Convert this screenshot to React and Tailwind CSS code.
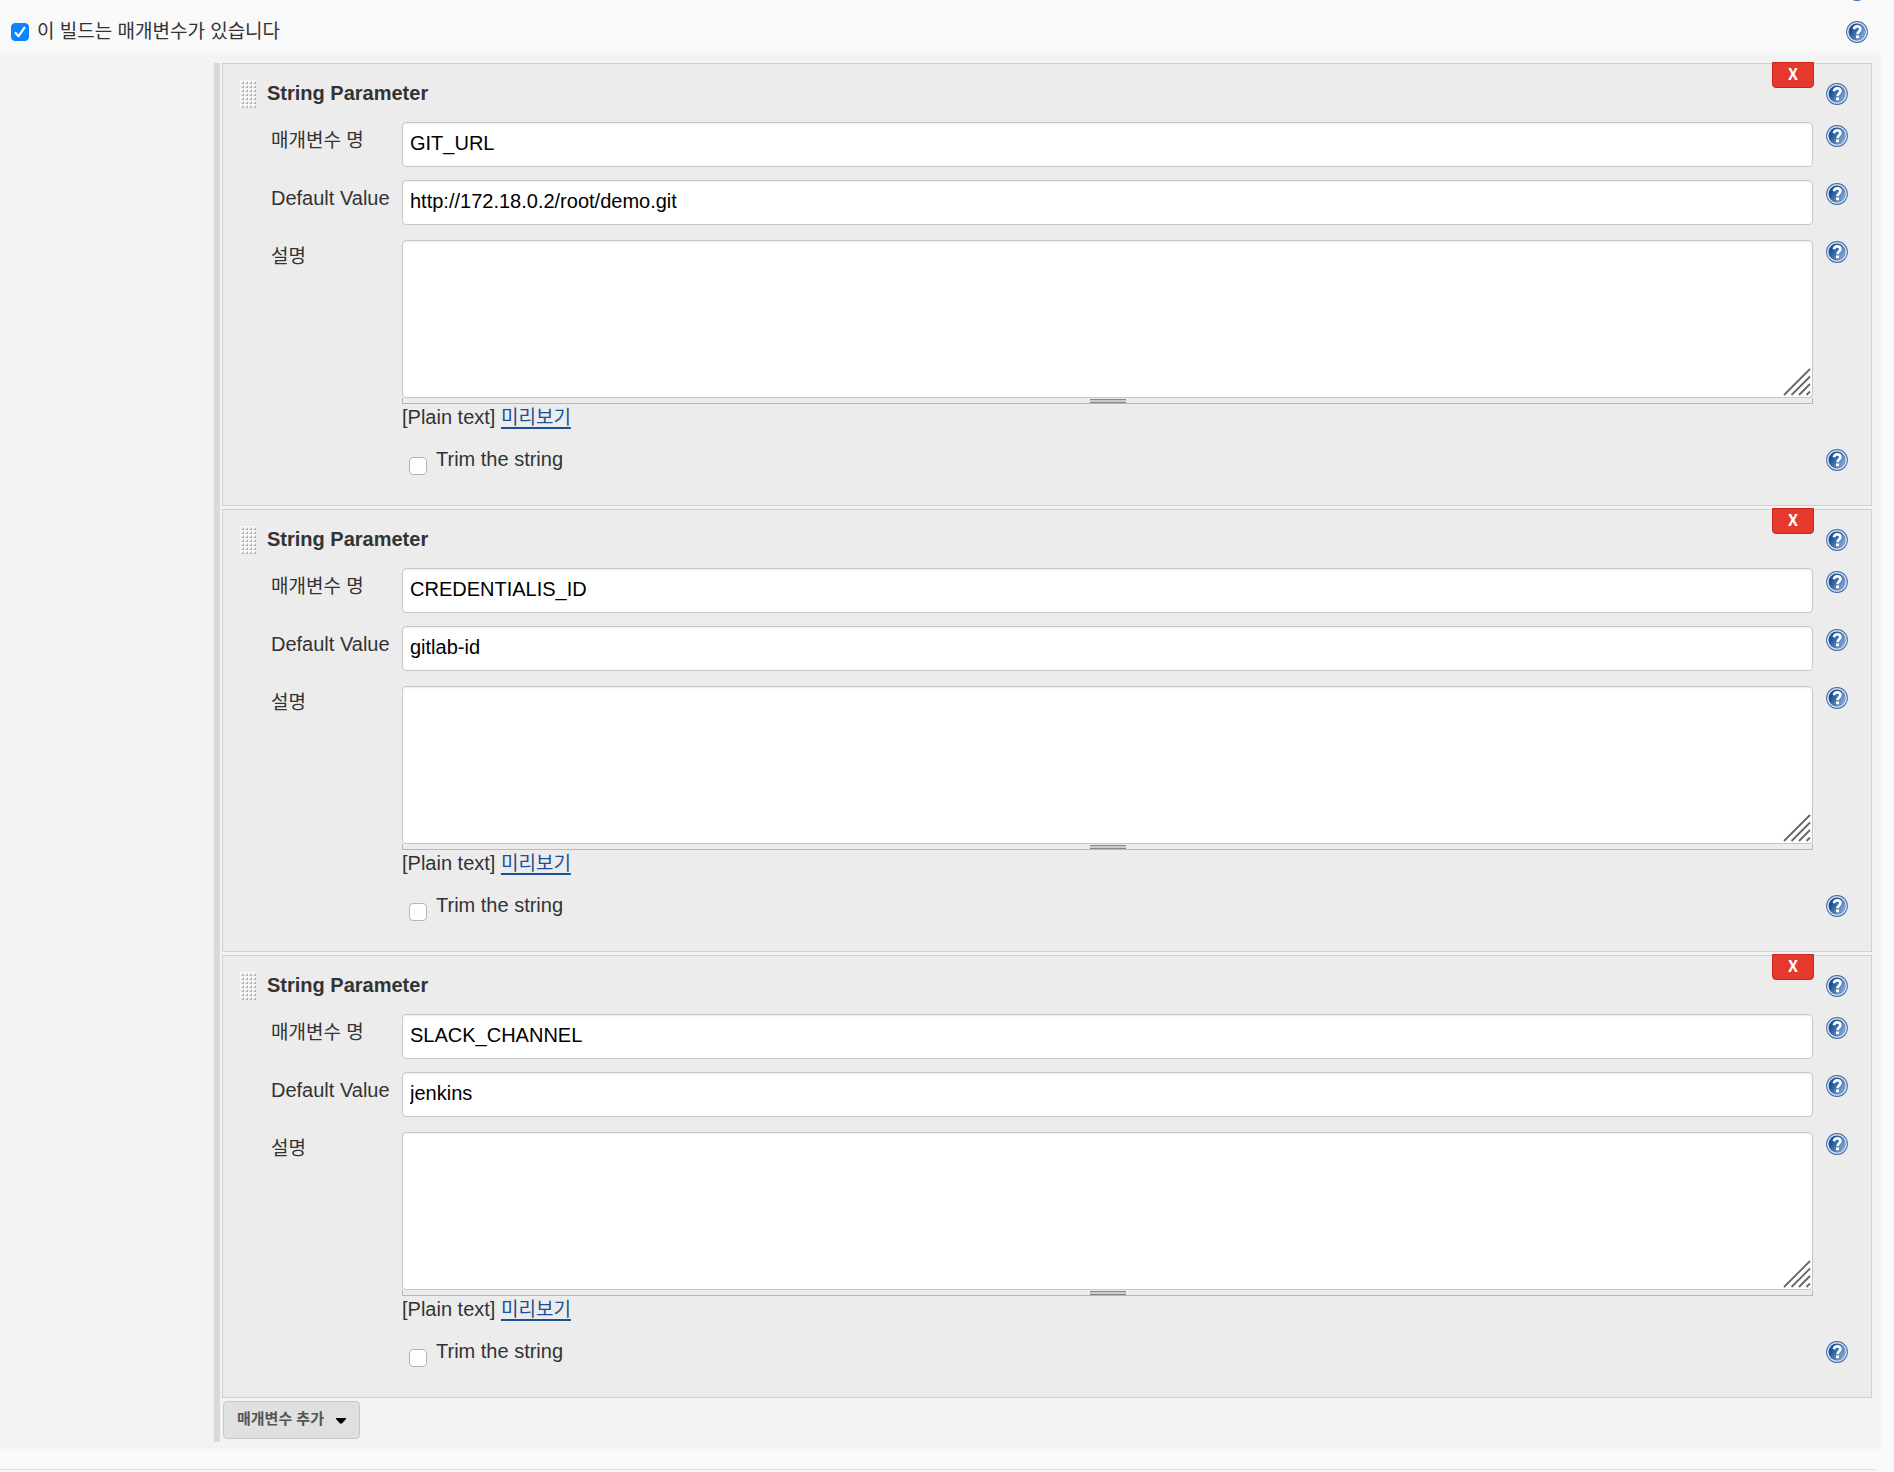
import React, { useState } from 'react';

const INITIAL_PARAMETERS = [
  { id: 1, name: 'GIT_URL', defaultValue: 'http://172.18.0.2/root/demo.git' },
  { id: 2, name: 'CREDENTIALIS_ID', defaultValue: 'gitlab-id' },
  { id: 3, name: 'SLACK_CHANNEL', defaultValue: 'jenkins' },
];

const INPUT_CLASS =
  "block w-full h-[45px] px-[7px] pb-[3px] text-[20px] text-black bg-white border border-[#c8c8c8] rounded-[4px] shadow-[inset_0_1px_2px_rgba(0,0,0,0.08)] outline-none";

function HelpIcon() {
  return (
    <svg viewBox="0 0 22 22" className="block w-[22px] h-[22px]">
      <defs>
        <linearGradient id="helpFill" x1="0" y1="0.2" x2="1" y2="0.8">
          <stop offset="0.2" stopColor="#1d5296" />
          <stop offset="1" stopColor="#8db0d8" />
        </linearGradient>
      </defs>
      <circle cx="11" cy="11" r="10.9" fill="#3f6ca8" />
      <circle cx="11" cy="11" r="9.2" fill="none" stroke="#d3dfee" strokeWidth="1.6" />
      <circle cx="11" cy="11" r="8.2" fill="url(#helpFill)" />
      <path
        d="M7.8 8.2C8.2 6.3 9.4 5.4 11.2 5.4c1.9 0 3.2 1 3.2 2.7 0 2.3-2.8 2.5-2.9 5"
        fill="none"
        stroke="#fff"
        strokeWidth="2.6"
      />
      <rect x="10" y="14.4" width="3" height="2.8" fill="#fff" />
    </svg>
  );
}

function HelpButton({ label }) {
  return (
    <button type="button" aria-label={label} className="block shrink-0">
      <HelpIcon />
    </button>
  );
}

function DragHandle() {
  return (
    <svg viewBox="0 0 16 28" className="block w-4 h-7">
      <defs>
        <pattern id="grip" width="4" height="4" patternUnits="userSpaceOnUse">
          <rect width="4" height="4" fill="#f8f8f8" />
          <path d="M4 1v3H1z" fill="#b4b4b4" />
        </pattern>
      </defs>
      <rect width="16" height="28" fill="url(#grip)" />
    </svg>
  );
}

function Row({ label, htmlFor, help, children }) {
  return (
    <div className="flex items-start pl-12">
      <div className="w-[131px] shrink-0 pt-[6px] leading-6">
        {label && <label htmlFor={htmlFor} className="block">{label}</label>}
      </div>
      <div className="flex-1 min-w-0">{children}</div>
      <div className="shrink-0 pl-[13px] pr-[23px] pt-[3px]">
        <HelpButton label={help} />
      </div>
    </div>
  );
}

function Korean({ children }) {
  return <span className="text-[19px] leading-5">{children}</span>;
}

function ParameterCard({ parameter, onRemove }) {
  const { id, name, defaultValue } = parameter;

  return (
    <section className="relative bg-[#ececec] border border-[#d0d0d0] pb-[30px]">
      <button
        type="button"
        onClick={() => onRemove(id)}
        className="absolute -top-[2px] right-[57px] w-[42px] h-[26px] bg-[#e6392e] border border-[#c9271d] rounded-b-[4px] text-white font-bold text-[16px] leading-5 pb-1 font-['Noto_Sans_CJK_KR',sans-serif]"
      >
        X
      </button>

      <div className="flex items-start h-[58px] pl-[17px] pr-[23px] pt-4">
        <DragHandle />
        <h2 className="flex-1 pl-[11px] font-bold leading-[26px]">String Parameter</h2>
        <div className="pt-[3px]">
          <HelpButton label="String Parameter" />
        </div>
      </div>

      <div className="h-[58px]">
        <Row label={<Korean>매개변수 명</Korean>} htmlFor={`name-${id}`} help="매개변수 명">
          <input id={`name-${id}`} type="text" defaultValue={name} className={INPUT_CLASS} />
        </Row>
      </div>

      <div className="h-[58px]">
        <Row label="Default Value" htmlFor={`default-${id}`} help="Default Value">
          <input id={`default-${id}`} type="text" defaultValue={defaultValue} className={INPUT_CLASS} />
        </Row>
      </div>

      <Row label={<Korean>설명</Korean>} htmlFor={`description-${id}`} help="설명">
        <div className="relative pt-[2px]">
          <textarea
            id={`description-${id}`}
            className="block w-full h-[158px] p-[7px] bg-white border border-[#c8c8c8] rounded-[4px] shadow-[inset_0_1px_2px_rgba(0,0,0,0.08)] resize-none outline-none"
          />
          <svg viewBox="0 0 28 28" className="absolute right-[2px] bottom-[2px] w-7 h-7 pointer-events-none">
            <path d="M1 27L27 1M8.500 27L27 8.500M16 27L27 16M23.500 27L27 23.500" stroke="#666" strokeWidth="1.800" />
          </svg>
        </div>
        <div className="flex justify-center h-[6px] pt-px border-x border-b border-[#b8b8b8]">
          <div className="w-9 h-1 bg-[#ccc] border-y border-[#888]" />
        </div>
        <div className="h-[26px] leading-[26px]">
          [Plain text]{' '}
          <a href="#preview" className="text-[#1a5096] underline underline-offset-[3px]">
            <Korean>미리보기</Korean>
          </a>
        </div>
      </Row>

      <div className="pt-4">
        <Row help="Trim the string">
          <div className="flex items-start pl-[7px] leading-6">
            <input
              id={`trim-${id}`}
              type="checkbox"
              className="appearance-none w-[18px] h-[18px] mt-[11px] bg-white border border-[#b4b4b4] rounded-[4px]"
            />
            <label htmlFor={`trim-${id}`} className="pl-[9px] pt-px">
              Trim the string
            </label>
          </div>
        </Row>
      </div>
    </section>
  );
}

export default function App() {
  const [parameters, setParameters] = useState(INITIAL_PARAMETERS);
  const [enabled, setEnabled] = useState(true);

  const handleAdd = () => {
    setParameters([...parameters, { id: Date.now(), name: '', defaultValue: '' }]);
  };

  const handleRemove = (id) => {
    setParameters(parameters.filter(p => p.id !== id));
  };

  return (
    <div className="min-h-screen overflow-hidden bg-[#f9f9f9] text-[#333] text-[20px] font-['Liberation_Sans','Noto_Sans_CJK_KR',sans-serif]">
      <div className="flex justify-end -mt-[21px] pr-[26px]">
        <HelpButton label="도움말" />
      </div>

      <header className="flex items-start justify-between h-[52px] pl-[11px] pr-[26px]">
        <div className="flex items-start pt-[18px]">
          <div className="relative mt-1">
            <input
              id="parameterized"
              type="checkbox"
              checked={enabled}
              onChange={(e) => setEnabled(e.target.checked)}
              className="block appearance-none w-[18px] h-[18px] rounded-[4px] border border-[#b4b4b4] bg-white checked:bg-[#0b84ff] checked:border-[#0b84ff]"
            />
            {enabled && (
              <svg viewBox="0 0 18 18" className="absolute inset-0 pointer-events-none">
                <path d="M4.500 9.800L7.500 13.200L13.500 4.600" fill="none" stroke="#fff" strokeWidth="2.200" strokeLinecap="round" strokeLinejoin="round" />
              </svg>
            )}
          </div>
          <label htmlFor="parameterized" className="pl-2 leading-6">
            <Korean>이 빌드는 매개변수가 있습니다</Korean>
          </label>
        </div>
        <div className="pt-5">
          <HelpButton label="이 빌드는 매개변수가 있습니다" />
        </div>
      </header>

      <main className="mr-[13px] pl-[214px] pr-[9px] pt-[10px] pb-[7px] bg-[#f3f3f3]">
        <div className="border-l-[6px] border-[#d9d9d9] pl-[2px] pb-[3px]">
          <div className="flex flex-col gap-[3px]">
            {parameters.map(p => (
              <ParameterCard key={p.id} parameter={p} onRemove={handleRemove} />
            ))}
          </div>
          <button
            type="button"
            onClick={handleAdd}
            className="flex items-center gap-3 h-[38px] mt-[3px] ml-px px-[13px] pb-px bg-[#e0e0e0] border border-[#c8c8c8] rounded-[4px] text-[15px] font-bold text-[#555]"
          >
            매개변수 추가
            <svg viewBox="0 0 10 6" className="w-[10px] h-[6px] mt-[3px]">
              <path d="M0 0h10v1L6 5.500H4L0 1z" fill="#000" />
            </svg>
          </button>
        </div>
      </main>

      <hr className="mt-5 mr-[19px] border-[#ddd]" />
    </div>
  );
}
